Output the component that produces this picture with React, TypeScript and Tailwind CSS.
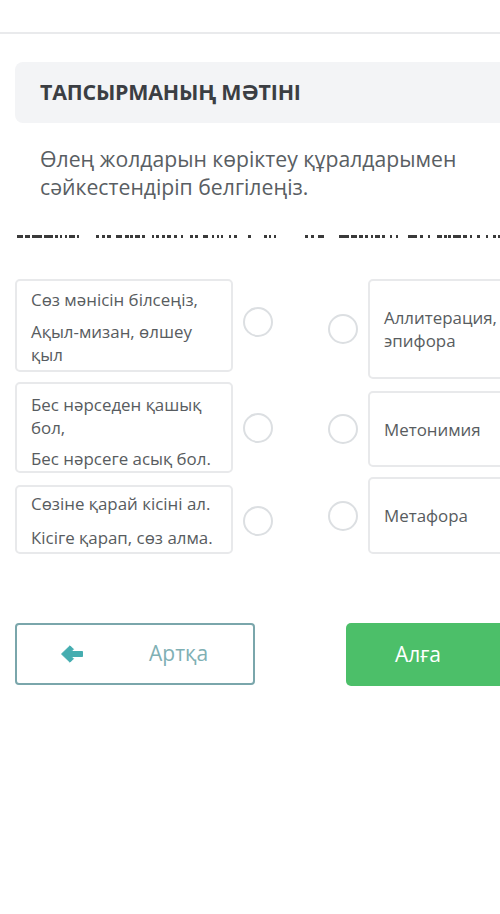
import React from "react";

const dashes: [number, number][] = [
  [17, 4], [21, 2], [25, 5], [32, 10], [44, 9], [55, 3], [60, 2], [65, 2], [69, 6], [77, 2],
  [96, 3], [102, 3], [107, 4], [116, 6], [125, 4], [130, 3], [135, 5], [142, 3], [152, 2], [156, 3],
  [162, 3], [167, 4], [174, 3], [181, 2], [190, 3], [195, 3], [203, 5], [212, 2], [217, 2], [221, 2],
  [229, 2], [234, 3], [248, 3], [264, 3], [269, 2], [274, 2], [305, 3], [311, 3], [318, 6], [339, 10],
  [351, 6], [359, 4], [365, 3], [371, 2], [375, 5], [382, 3], [390, 2], [396, 2], [408, 9], [420, 3],
  [428, 2], [437, 5], [444, 3], [448, 3], [453, 8], [463, 4], [470, 2], [477, 3], [486, 2], [493, 3], [498, 2],
];

function Circle() {
  return <div className="w-[30px] h-[30px] rounded-full border-2 border-[#dcdfe2] bg-white shrink-0" />;
}

export default function App() {
  const font = { fontFamily: '"Open Sans", "Noto Sans", sans-serif' };
  return (
    <div className="w-[500px] h-[914px] overflow-hidden bg-white relative" style={font}>
      <div className="h-[34px] border-b-2 border-[#e9eaec]" />
      <div className="pl-[15px] pt-[28px]">
        <div className="w-[520px] h-[61px] rounded-[8px] bg-[#f3f4f6] flex items-center pl-[25px]">
          <span className="text-[21.4px] font-bold text-[#3b3e43] tracking-[-0.2px]">ТАПСЫРМАНЫҢ МӘТІНІ</span>
        </div>
      </div>
      <div className="pl-[40px] pt-[22px] text-[21.2px] leading-[28px] text-[#595e63] whitespace-nowrap">
        <p>Өлең жолдарын көріктеу құралдарымен</p>
        <p>сәйкестендіріп белгілеңіз.</p>
      </div>
      <svg width="500" height="6" className="block mt-[33px]">
        {dashes.map(([x, w], i) => (
          <rect key={i} x={x} y={1} width={w} height={3} fill="#3a3a3a" />
        ))}
      </svg>
      <div className="flex pl-[15px] pt-[39px] text-[16.9px] leading-[23px] text-[#585c60]">
        <div className="flex flex-col shrink-0">
          <div className="flex items-center">
            <div className="w-[218px] h-[93px] rounded-[5px] border-2 border-[#e8e9eb] pl-[14px] pr-[8px] pt-[7px]">
              <p>Сөз мәнісін білсеңіз,</p>
              <p className="mt-[9px]">Ақыл-мизан, өлшеу қыл</p>
            </div>
            <div className="ml-[10px] -mt-[7px]"><Circle /></div>
          </div>
          <div className="flex items-center mt-[10px]">
            <div className="w-[218px] h-[91px] rounded-[5px] border-2 border-[#e8e9eb] pl-[14px] pr-[8px] pt-[9px]">
              <p>Бес нәрседен қашық бол,</p>
              <p className="mt-[8px]">Бес нәрсеге асық бол.</p>
            </div>
            <div className="ml-[10px]"><Circle /></div>
          </div>
          <div className="flex items-center mt-[12px]">
            <div className="w-[218px] h-[69px] rounded-[5px] border-2 border-[#e8e9eb] pl-[14px] pr-[6px] pt-[5px] whitespace-nowrap">
              <p>Сөзіне қарай кісіні ал.</p>
              <p className="mt-[11px]">Кісіге қарап, сөз алма.</p>
            </div>
            <div className="ml-[10px] mt-[3px]"><Circle /></div>
          </div>
        </div>
        <div className="flex flex-col ml-[55px] shrink-0">
          <div className="flex items-center">
            <Circle />
            <div className="ml-[10px] w-[160px] h-[100px] rounded-[5px] border-2 border-[#e8e9eb] pl-[14px] flex items-center">
              <p>Аллитерация,<br />эпифора</p>
            </div>
          </div>
          <div className="flex items-center mt-[12px]">
            <Circle />
            <div className="ml-[10px] w-[160px] h-[76px] rounded-[5px] border-2 border-[#e8e9eb] pl-[14px] flex items-center">
              <p>Метонимия</p>
            </div>
          </div>
          <div className="flex items-center mt-[10px]">
            <Circle />
            <div className="ml-[10px] w-[160px] h-[77px] rounded-[5px] border-2 border-[#e8e9eb] pl-[14px] flex items-center">
              <p>Метафора</p>
            </div>
          </div>
        </div>
      </div>
      <div className="flex pl-[15px] pt-[69px]">
        <div className="shrink-0 w-[240px] h-[62px] rounded-[4px] border-2 border-[#7aa6ab] flex items-center">
          <svg width="22" height="18" viewBox="0 0 22 18" className="ml-[44px]">
            <path d="M0.5 9 L9 0.8 L12.5 4.3 L9.8 6.5 H21.5 V11.5 H9.8 L12.5 13.7 L9 17.2 Z" fill="#45adb0" stroke="#45adb0" strokeWidth="1" strokeLinejoin="round" />
          </svg>
          <span className="ml-[66px] text-[21px] text-[#7fb0b4]">Артқа</span>
        </div>
        <div className="shrink-0 ml-[91px] w-[170px] h-[63px] rounded-[5px] bg-[#4cbf69] flex items-center">
          <span className="ml-[49px] text-[21px] text-white">Алға</span>
        </div>
      </div>
    </div>
  );
}
